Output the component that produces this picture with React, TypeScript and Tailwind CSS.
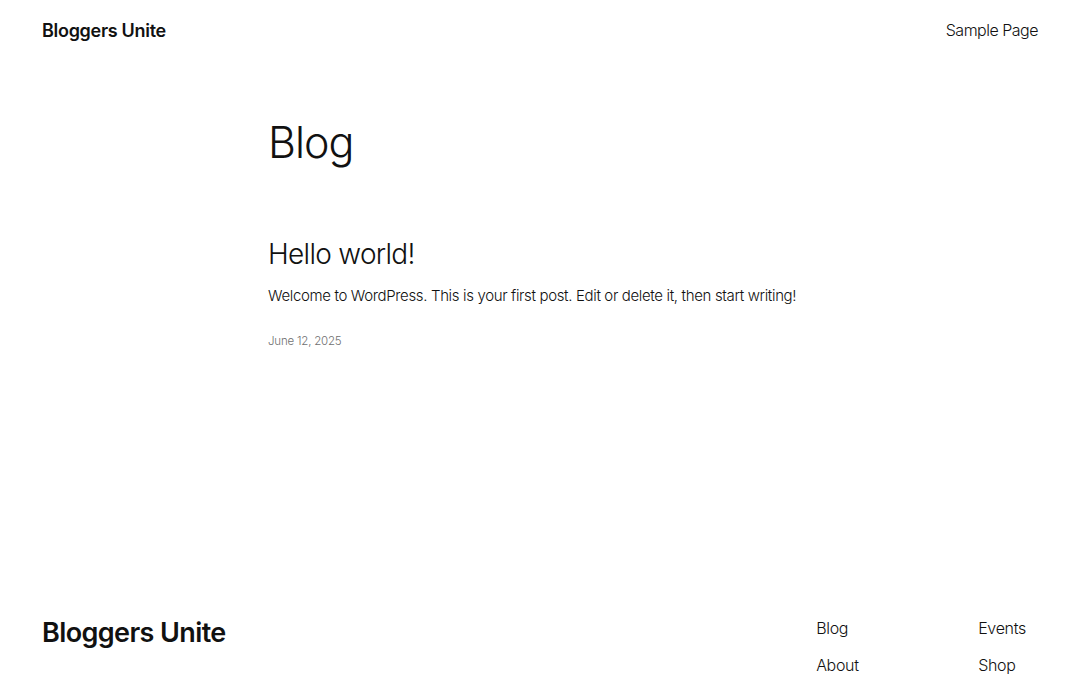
import React from "react";

export default function App() {
  const font = { fontFamily: "Inter, 'Noto Sans', sans-serif" };
  return (
    <div className="min-h-[675px] w-[1080px] bg-white text-[#111111] overflow-hidden" style={font}>
      <header className="flex items-center justify-between px-[42px] h-[60px]">
        <div className="text-[18px] font-semibold tracking-[-0.3px]">Bloggers Unite</div>
        <nav className="text-[16px] font-light tracking-[-0.5px]">Sample Page</nav>
      </header>
      <main className="pl-[268px]">
        <h1 className="mt-[57px] text-[43px] font-light leading-[1.2] tracking-[-1px]">Blog</h1>
        <article className="mt-[69px]">
          <h2 className="text-[28px] font-light leading-[1.2] tracking-[-0.7px]">Hello world!</h2>
          <p className="mt-[14px] text-[15px] font-light tracking-[-0.35px]">
            Welcome to WordPress. This is your first post. Edit or delete it, then start writing!
          </p>
          <div className="mt-[25px] text-[11.5px] font-light text-[#6f6f6f] tracking-[-0.2px]">June 12, 2025</div>
        </article>
      </main>
      <footer className="mt-[267px] flex items-start justify-between pl-[42px] pr-[54px]">
        <div className="text-[27px] font-semibold tracking-[-0.6px] leading-[1.2]">Bloggers Unite</div>
        <div className="grid grid-cols-[162px_auto] gap-y-[14px] text-[16px] font-light tracking-[-0.3px] leading-[23px]">
          <span>Blog</span>
          <span>Events</span>
          <span>About</span>
          <span>Shop</span>
        </div>
      </footer>
    </div>
  );
}
